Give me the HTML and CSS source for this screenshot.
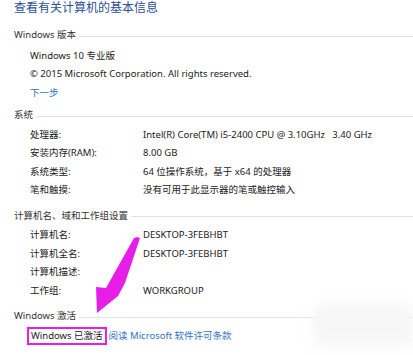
FILE: index.html
```html
<!DOCTYPE html>
<html lang="zh-CN">
<head>
    <meta charset="UTF-8">
    <title>系统</title>
    <link rel="stylesheet" href="styles.css">
</head>
<body>
<div class="page">
    <h1 class="title">查看有关计算机的基本信息</h1>

    <!-- Windows 版本 -->
    <div class="group group-edition">
        <div class="group-head"><span>Windows 版本</span><i class="rule"></i></div>
        <div class="rows">
            <div class="line">Windows 10 专业版</div>
            <div class="line">© 2015 Microsoft Corporation. All rights reserved.</div>
            <div class="line"><a class="link" href="#">下一步</a></div>
        </div>
    </div>

    <!-- 系统 -->
    <div class="group">
        <div class="group-head"><span>系统</span><i class="rule"></i></div>
        <div class="rows grid">
            <span class="label">处理器:</span><span>Intel(R) Core(TM) i5-2400 CPU @ 3.10GHz&nbsp;&nbsp;&nbsp;3.40 GHz</span>
            <span class="label">安装内存(RAM):</span><span>8.00 GB</span>
            <span class="label">系统类型:</span><span>64 位操作系统，基于 x64 的处理器</span>
            <span class="label">笔和触摸:</span><span>没有可用于此显示器的笔或触控输入</span>
        </div>
    </div>

    <!-- 计算机名 -->
    <div class="group">
        <div class="group-head"><span>计算机名、域和工作组设置</span><i class="rule"></i></div>
        <div class="rows grid">
            <span class="label">计算机名:</span><span>DESKTOP-3FEBHBT</span>
            <span class="label">计算机全名:</span><span>DESKTOP-3FEBHBT</span>
            <span class="label">计算机描述:</span><span></span>
            <span class="label">工作组:</span><span>WORKGROUP</span>
        </div>
    </div>

    <!-- Windows 激活 -->
    <div class="group">
        <div class="group-head"><span>Windows 激活</span><i class="rule"></i></div>
        <div class="rows">
            <div class="line activation">
                <span class="mark">Windows 已激活</span>
                <a class="link" href="#">阅读 Microsoft 软件许可条款</a>
            </div>
        </div>
    </div>

    <div class="smudge"></div>

    <svg class="arrow" width="413" height="355" viewBox="0 0 413 355">
        <polygon points="137,237 140,238 125,283 118,296 97,313 96,287 106,288 134,238" fill="#e81ee8"/>
    </svg>
</div>
</body>
</html>
```

FILE: styles.css
```css
body {
    margin: 0;
    background: #fff;
    font-family: 'Noto Sans', 'Noto Sans CJK SC', sans-serif;
    font-size: 9.5px;
    color: #1a1a1a;
}
.page {
    position: relative;
    width: 413px;
    height: 355px;
    padding-left: 14px;
    box-sizing: border-box;
    overflow: hidden;
}
.title {
    margin: 0;
    font-size: 12px;
    font-weight: normal;
    line-height: 15px;
    color: #2a4f9b;
}
.group {
    margin-bottom: 7px;
}
.group-edition {
    margin-top: 11px;
    margin-bottom: 4px;
}
.group-edition .rows {
    padding-top: 2.5px;
}
.group-head {
    display: flex;
    align-items: center;
    height: 18px;
    line-height: 18px;
    color: #333;
}
.rule {
    flex: 1;
    margin: 2px 0 0 3px;
    border-top: 1px solid #e2e2e2;
}
.rows {
    padding: 1.5px 0 0 16px;
    line-height: 18.5px;
}
.grid {
    display: grid;
    grid-template-columns: 113px 1fr;
}
.link {
    color: #2f73c3;
    text-decoration: none;
}
.activation {
    display: flex;
    align-items: center;
}
.mark {
    margin-left: -3px;
    margin-right: 2px;
    padding: 0 2px;
    border: 2px solid #e81ee8;
    line-height: 14px;
}
.smudge {
    position: absolute;
    right: 0;
    top: 305px;
    width: 100px;
    height: 40px;
    background: #f6f6f6;
    filter: blur(6px);
}
.arrow {
    position: absolute;
    left: 0;
    top: 0;
    pointer-events: none;
}
```
